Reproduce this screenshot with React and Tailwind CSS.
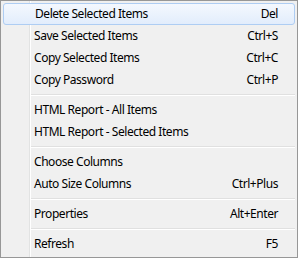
import React from 'react';

const groups = [
  [
    { label: 'Delete Selected Items', shortcut: 'Del', active: true },
    { label: 'Save Selected Items', shortcut: 'Ctrl+S' },
    { label: 'Copy Selected Items', shortcut: 'Ctrl+C' },
    { label: 'Copy Password', shortcut: 'Ctrl+P' },
  ],
  [
    { label: 'HTML Report - All Items' },
    { label: 'HTML Report - Selected Items' },
  ],
  [
    { label: 'Choose Columns' },
    { label: 'Auto Size Columns', shortcut: 'Ctrl+Plus' },
  ],
  [{ label: 'Properties', shortcut: 'Alt+Enter' }],
  [{ label: 'Refresh', shortcut: 'F5' }],
];

const Gutter = () => (
  <span className="w-[27px] h-full shrink-0 border-r border-[#e2e3e3] shadow-[1px_0_0_#ffffff]" />
);

const MenuItem = ({ label, shortcut, active }) => {
  if (active) {
    return (
      <div className="h-[22px] flex items-center rounded-[3px] border border-[#aecdf3] bg-gradient-to-b from-[#f4f8fe] to-[#e2edfc] pl-[31px] pr-[16px]">
        <span className="flex-1">{label}</span>
        {shortcut && <span>{shortcut}</span>}
      </div>
    );
  }
  return (
    <div className="h-[22px] flex items-center">
      <Gutter />
      <span className="flex-1 pl-[4px]">{label}</span>
      {shortcut && <span className="pr-[17px]">{shortcut}</span>}
    </div>
  );
};

const Separator = () => (
  <div className="h-[8px] flex">
    <Gutter />
    <div className="flex-1 pl-[1px] pt-[3px]">
      <div className="h-px bg-[#e0e0e0]" />
      <div className="h-px bg-white" />
    </div>
  </div>
);

export default function App() {
  return (
    <div className="w-[298px] h-[258px] border border-[#979797] bg-[#f0f0f0] px-[2px] text-[12px] leading-none tracking-[-0.45px] text-black font-['Noto_Sans',sans-serif]">
      <div className="h-[2px] flex">
        <Gutter />
      </div>
      {groups.map((items, gi) => (
        <React.Fragment key={gi}>
          {gi > 0 && <Separator />}
          {items.map((item) => (
            <MenuItem key={item.label} {...item} />
          ))}
        </React.Fragment>
      ))}
      <div className="h-[2px] flex">
        <Gutter />
      </div>
    </div>
  );
}
